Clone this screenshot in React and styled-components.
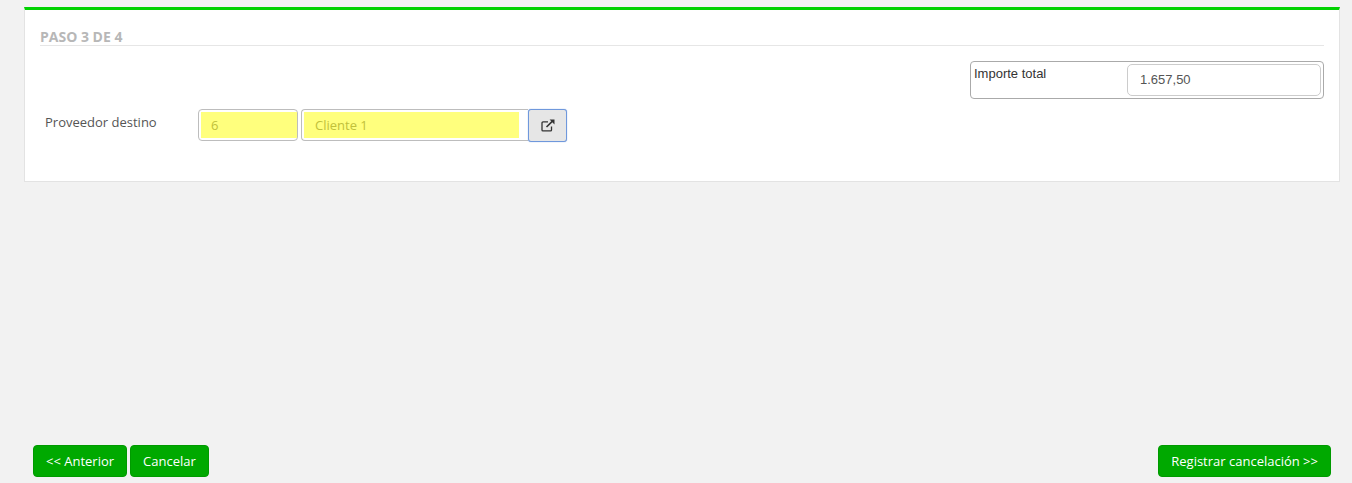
import React from "react";
import styled, { createGlobalStyle } from "styled-components";

const Global = createGlobalStyle`
  html, body { margin: 0; padding: 0; background: #f2f2f2; }
  body { font-family: "Open Sans", sans-serif; font-size: 13px; color: #555; }
`;
const Page = styled.div`
  height: 483px; box-sizing: border-box; overflow: hidden;
  display: flex; flex-direction: column; justify-content: space-between;
  padding: 7px 12px 6px 24px;
`;
const Card = styled.section`
  height: 175px; box-sizing: border-box; background: #fff;
  border: 1px solid #e3e3e3;
  border-top: 3px solid #00d200;
  padding: 0 15px;
`;
const StepTitle = styled.h2`
  margin: 0; height: 36px; box-sizing: border-box; padding-top: 17px;
  font-size: 14px; line-height: 19px; font-weight: 700; color: #b7b7b7;
  border-bottom: 1px solid #e6e6e6;
`;
const TotalRow = styled.div`
  display: flex; justify-content: flex-end; margin-top: 15px;
`;
const TotalBox = styled.div`
  width: 354px; height: 38px; box-sizing: border-box;
  border: 1px solid #aaa; border-radius: 4px;
  display: flex; justify-content: space-between; padding: 2px 2px 0 3px;
  font-family: "Liberation Sans", Arial, sans-serif; font-size: 13px; color: #333;
`;
const TotalLabel = styled.span`
  line-height: 18px; margin-top: 1px;
`;
const TotalValue = styled.div`
  width: 194px; height: 32px; box-sizing: border-box;
  border: 1px solid #ccc; border-radius: 5px;
  padding-left: 12px; line-height: 30px; color: #555;
`;
const FieldRow = styled.div`
  display: flex; align-items: flex-start; margin-top: 10px; padding-left: 5px;
`;
const FieldLabel = styled.label`
  width: 153px; line-height: 18px; margin-top: 4px; color: #555; font-size: 13px;
`;
const Input = styled.div`
  width: ${p => p.$w}px; height: 32px; box-sizing: border-box;
  border: 1px solid #bdbdbd; border-radius: 4px; background: #fff;
  padding: 2px ${p => p.$pr}px 2px 2px; margin-right: ${p => p.$mr}px;
  ${p => p.$joined && "border-radius: 4px 0 0 4px; border-right: 0;"}
`;
const Fill = styled.div`
  height: 100%; background: #ffff7d; color: #c1c13b; padding-left: ${p => p.$pl}px;
  line-height: 27px; font-size: 13px;
`;
const IconButton = styled.button`
  width: 39px; height: 33px; box-sizing: border-box; margin: 0; padding: 0;
  border: 1px solid #6f98dc; border-radius: 3px; background: #e6e6e6;
  box-shadow: 0 0 1px #6f98dc;
  display: flex; align-items: center; justify-content: center; color: #333;
`;
const Footer = styled.footer`
  display: flex; justify-content: space-between; padding: 0 9px;
`;
const Group = styled.div`
  display: flex; gap: 3px;
`;
const Button = styled.button`
  height: 32px; margin: 0; padding: 0 12px; box-sizing: border-box;
  background: #00a900; border: 1px solid #009a00; border-radius: 4px; color: #fff;
  font-family: "Open Sans", sans-serif; font-size: 13px; line-height: 30px;
`;

const ExternalIcon = () => (
  <svg width="14" height="13" viewBox="0 0 14 13" fill="none" stroke="currentColor" strokeWidth="1.3">
    <path d="M10.500 7.500v3.400a1 1 0 0 1-1 1H2a1 1 0 0 1-1-1V3.900a1 1 0 0 1 1-1H7" />
    <path d="M5.500 8 12 1.600" strokeWidth="1.600" />
    <path d="M8.600 .5H13.500V5.400Z" fill="currentColor" stroke="none" />
  </svg>
);

export default function App() {
  return (
    <>
      <Global />
      <Page>
        <Card>
          <StepTitle>PASO 3 DE 4</StepTitle>
          <TotalRow>
            <TotalBox>
              <TotalLabel>Importe total</TotalLabel>
              <TotalValue>1.657,50</TotalValue>
            </TotalBox>
          </TotalRow>
          <FieldRow>
            <FieldLabel>Proveedor destino</FieldLabel>
            <Input $w={100} $pr={0} $mr={3}><Fill $pl={10}>6</Fill></Input>
            <Input $w={227} $pr={9} $mr={0} $joined><Fill $pl={11}>Cliente 1</Fill></Input>
            <IconButton aria-label="Abrir"><ExternalIcon /></IconButton>
          </FieldRow>
        </Card>
        <Footer>
          <Group>
            <Button>&lt;&lt; Anterior</Button>
            <Button>Cancelar</Button>
          </Group>
          <Button>Registrar cancelación &gt;&gt;</Button>
        </Footer>
      </Page>
    </>
  );
}
